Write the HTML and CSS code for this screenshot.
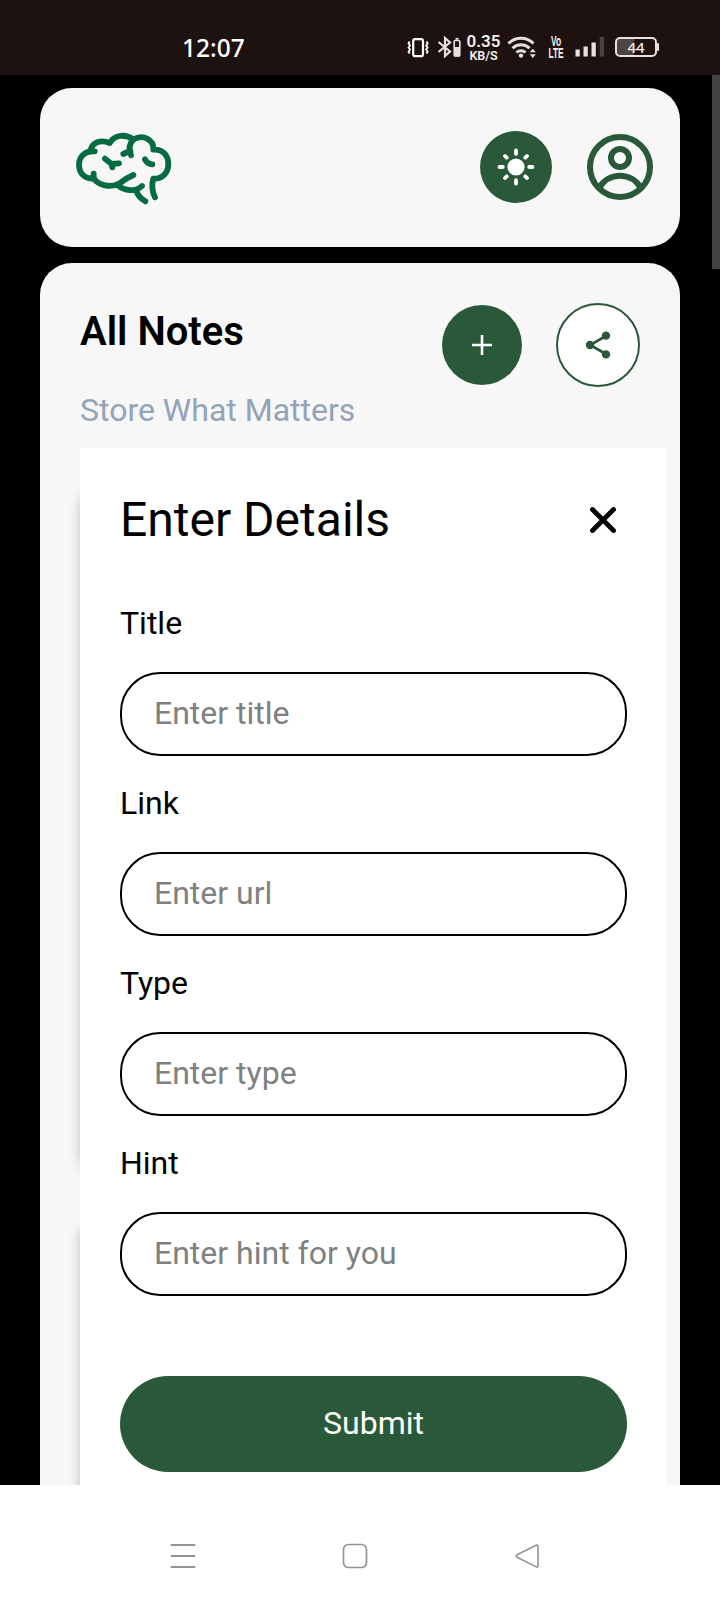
FILE: index.html
```html
<!DOCTYPE html>
<html lang="en">
<head>
<meta charset="utf-8">
<title>All Notes</title>
<link rel="stylesheet" href="styles.css">
</head>
<body>
<div class="phone">
  <div class="status">
    <span class="clock">12:07</span>
    <div class="status-icons">
      <svg class="vibrate" width="22" height="20" viewBox="0 0 22 20" fill="none" stroke="#fff"><rect x="6.200" y="1.200" width="9.800" height="17" rx="2" stroke-width="2.200"/><path d="M2.600 3.500l-1 2 1.400 2-1.400 2 1.400 2-1.400 2 1 2M19.600 3.500l1 2-1.400 2 1.400 2-1.400 2 1.400 2-1 2" stroke-width="1.900"/></svg>
      <svg class="bluetooth" width="24" height="22" viewBox="0 0 24 22" fill="none" stroke="#e6e1e0"><path d="M1.500 6L13 15.500 8 20V2l5 4.500L1.500 16" stroke-width="2.200"/><rect x="17.200" y="4.500" width="5.600" height="15.500" rx="1" stroke-width="1.600"/><path d="M17 11h6v9.500h-6z" fill="#e6e1e0" stroke="none"/><path d="M18.500 2.800h3" stroke-width="1.800"/></svg>
      <div class="speed"><span class="rate">0.35</span><span class="unit">KB/S</span></div>
      <svg class="wifi" width="30" height="24" viewBox="0 0 30 24" fill="none" stroke="#e6e1e0" stroke-width="3"><path d="M1.500 7.500a17.500 17.500 0 0 1 25 0M5.500 12.200a12 12 0 0 1 17 0M9.500 16.500a6.500 6.500 0 0 1 9 0"/><circle cx="14" cy="19.600" r="2.200" fill="#e6e1e0" stroke="none"/><path d="M22.800 16.300l3-3.600 3 3.600zM22.800 18.300l3 3.600 3-3.600z" fill="#e6e1e0" stroke="none"/></svg>
      <div class="volte"><span>Vo</span><span>LTE</span></div>
      <svg class="signal" width="30" height="20" viewBox="0 0 30 20"><path d="M.5 12.500h4.300v7H.5zM8.500 9.500h4.300v10H8.500zM16.500 5.500h4.300v14h-4.300z" fill="#e6e1e0"/><path d="M24.700 0H29v19.500h-4.300z" fill="#4a4140"/></svg>
      <div class="battery">44</div>
    </div>
  </div>

  <div class="page">
    <header class="topbar">
      <svg class="brain" width="96" height="72" viewBox="0 0 96 72"><g transform="scale(.3333) translate(-15 -18)" fill="none" stroke="#076b42" stroke-width="17.500" stroke-linecap="round" stroke-linejoin="round"><path d="M74 79C44 77 27 96 27 119 27 145 46 164 71 160V146"/><path d="M62 77C66 52 92 43 119 54 134 28 168 26 190 44 218 26 252 43 250 74 280 72 295 92 295 117 295 143 278 162 250 161 244 182 248 203 255 217"/><path d="M71 160C86 181 121 190 149 175 164 163 176 156 190 150M142 180C164 198 196 202 216 183M199 198C204 212 214 222 226 229"/><path d="M190 44C176 57 177 75 183 91M160 87L181 77M105 101L125 117 147 115M125 117L127 127M225 103Q232 117 247 118"/></g></svg>
      <div class="top-actions">
        <button class="theme" aria-label="Light theme"><svg width="38" height="38" viewBox="0 0 38 38"><circle cx="19" cy="19" r="8.600" fill="#fff"/><path d="M19 2.500v3.300M19 32.200v3.300M2.500 19h3.300M32.200 19h3.300M8 8l1.700 1.700M28.300 28.300L30 30M8 30l1.700-1.700M28.300 9.700L30 8" stroke="#fff" stroke-width="3.800" stroke-linecap="round"/></svg></button>
        <svg class="user" width="66" height="66" viewBox="0 0 66 66" fill="none" stroke="#2a5939" stroke-width="6"><circle cx="33" cy="33" r="30"/><circle cx="33" cy="24" r="9"/><path d="M12 54.500c9-17 33-17 42 0"/></svg>
      </div>
    </header>

    <main class="notes">
      <div class="notes-head">
        <h1>All Notes</h1>
        <div class="note-actions">
          <button class="round add" aria-label="Add"><svg width="20" height="20" viewBox="0 0 20 20"><path d="M10 0v20M0 10h20" stroke="#fff" stroke-width="2.600"/></svg></button>
          <button class="round share" aria-label="Share"><svg width="26" height="28" viewBox="0 0 26 28" fill="#2a5939"><path d="M21 5L5 14l16 9" fill="none" stroke="#2a5939" stroke-width="2.600"/><circle cx="21" cy="4.600" r="4.200"/><circle cx="5" cy="14" r="4.200"/><circle cx="21" cy="23.400" r="4.200"/></svg></button>
        </div>
      </div>
      <p class="subtitle">Store What Matters</p>
      <div class="note-list"><article class="note"></article><article class="note"></article></div>

      <form class="modal">
        <div class="modal-head">
          <h2>Enter Details</h2>
          <svg class="close" width="26" height="26" viewBox="0 0 26 26"><path d="M2.500 2.500l21 21M23.500 2.500l-21 21" stroke="#000" stroke-width="4.800" stroke-linecap="round"/></svg>
        </div>
        <div class="fields">
          <label class="field">Title<input type="text" placeholder="Enter title"></label>
          <label class="field">Link<input type="text" placeholder="Enter url"></label>
          <label class="field">Type<input type="text" placeholder="Enter type"></label>
          <label class="field">Hint<input type="text" placeholder="Enter hint for you"></label>
        </div>
        <button class="submit" type="button">Submit</button>
      </form>
    </main>
    <div class="scrollbar"></div>
  </div>

  <nav class="navbar">
    <svg width="26" height="26" viewBox="0 0 26 26" fill="none" stroke="#939393" stroke-width="1.900"><path d="M.8 2h24.400M.8 13h24.400M.8 24h24.400"/></svg>
    <svg width="26" height="26" viewBox="0 0 26 26" fill="none" stroke="#939393" stroke-width="1.700"><rect x="1.500" y="1.500" width="23" height="23" rx="5"/></svg>
    <svg width="26" height="26" viewBox="0 0 26 26" fill="none" stroke="#939393" stroke-width="1.600" stroke-linejoin="round"><path d="M22.300 2.200L3 11.800Q1.200 13 3 14.200L22.300 23.900Q24 24.500 24 22.800V3.200Q24 1.500 22.300 2.200z"/></svg>
  </nav>
</div>
</body>
</html>
```
FILE: styles.css
```css
* { box-sizing: border-box; }
body { margin: 0; font-family: Roboto, "Liberation Sans", sans-serif; background: #000; color: #000; }
h1, h2, p { margin: 0; }
svg { display: block; flex: none; }
button { border: 0; padding: 0; font: inherit; display: flex; align-items: center; justify-content: center; }

.phone { width: 720px; height: 1600px; display: flex; flex-direction: column; overflow: hidden; }

.status { height: 75px; flex: none; background: #1e1211; color: #fff; display: flex; justify-content: space-between; padding: 0 63px 0 182px; }
.clock { font: 500 24.500px/30px "Noto Sans", sans-serif; margin-top: 33px; }
.status-icons { display: flex; padding-top: 36px; align-items: flex-start; color: #f3efee; }
.vibrate { margin: 2px 8px 0 0; }
.bluetooth { margin-right: 5px; }
.speed { width: 35px; display: flex; flex-direction: column; align-items: center; font-family: Roboto, sans-serif; font-weight: 600; margin: -3px 6px 0 0; }
.rate { font-size: 17px; line-height: 17px; }
.unit { font-size: 12.500px; line-height: 12px; }
.wifi { margin-right: 9px; }
.volte { width: 20px; margin: -1px 9px 0 0; display: flex; flex-direction: column; align-items: center; font: 700 14px/12px "Liberation Sans", sans-serif; transform: scaleX(.6); }
.signal { margin: 1px 10px 0 0; }
.battery { width: 42px; height: 20px; border: 2px solid #e6e1e0; border-radius: 5px; margin-top: 1px; position: relative; background: linear-gradient(90deg, #4d4443 44%, transparent 44%); font: 500 15px/16px "Noto Sans", sans-serif; text-align: center; }
.battery::after { content: ""; position: absolute; right: -4px; top: 4px; width: 2px; height: 8px; background: #e6e1e0; border-radius: 1px; }

.page { flex: 1; min-height: 0; display: flex; flex-direction: column; gap: 16px; padding: 13px 40px 0; position: relative; overflow: hidden; }
.scrollbar { position: absolute; right: 0; top: 0; width: 8px; height: 194px; background: #424242; }

.topbar { height: 159px; flex: none; background: #f7f7f7; border-radius: 32px; display: flex; justify-content: space-between; align-items: center; padding: 0 27px 1px 35px; }
.brain { overflow: visible; }
.top-actions { display: flex; align-items: center; gap: 35px; }
.theme { width: 72px; height: 72px; border-radius: 50%; background: #2a5939; }

.notes { flex: 1; min-height: 0; background: #f7f7f7; border-radius: 32px 32px 0 0; padding: 40px 40px 0; position: relative; overflow: hidden; }
.notes-head { display: flex; justify-content: space-between; height: 84px; }
.notes-head h1 { font-size: 40px; line-height: 58px; font-weight: 600; }
.note-actions { display: flex; align-items: center; gap: 34px; }
.round { border-radius: 50%; }
.add { width: 80px; height: 80px; background: #2a5939; }
.share { width: 84px; height: 84px; border: 2px solid #2a5939; background: #fff; }
.subtitle { font-size: 32px; line-height: 46px; color: #94a3b8; }
.note-list { display: flex; flex-direction: column; gap: 48px; padding-top: 56px; }
.note { height: 684px; border-radius: 20px; background: #fff; box-shadow: 0 0 12px rgba(75, 100, 140, .38); }

.modal { position: absolute; left: 40px; right: 13px; top: 185px; bottom: 0; background: #fff; padding: 40px 40px 0; }
.modal-head { display: flex; justify-content: space-between; align-items: center; padding-right: 11px; margin-bottom: 48px; }
.modal-head h2 { font-size: 48px; line-height: 64px; font-weight: 400; }
.fields { display: flex; flex-direction: column; gap: 24px; }
.field { display: flex; flex-direction: column; gap: 26px; font-size: 32px; line-height: 46px; }
.field input { width: 100%; height: 84px; border: 2px solid #000; border-radius: 40px; padding: 0 32px 2px; font: 32px Roboto, sans-serif; background: #fff; outline: 0; }
.field input::placeholder { color: #808080; opacity: 1; }
.submit { width: 100%; height: 96px; margin-top: 80px; padding-bottom: 2px; border-radius: 48px; background: #2a5939; color: #fff; font-size: 32px; }

.navbar { height: 115px; flex: none; background: #fff; display: flex; align-items: center; justify-content: center; gap: 146px; padding: 27px 11px 0 0; }
```
